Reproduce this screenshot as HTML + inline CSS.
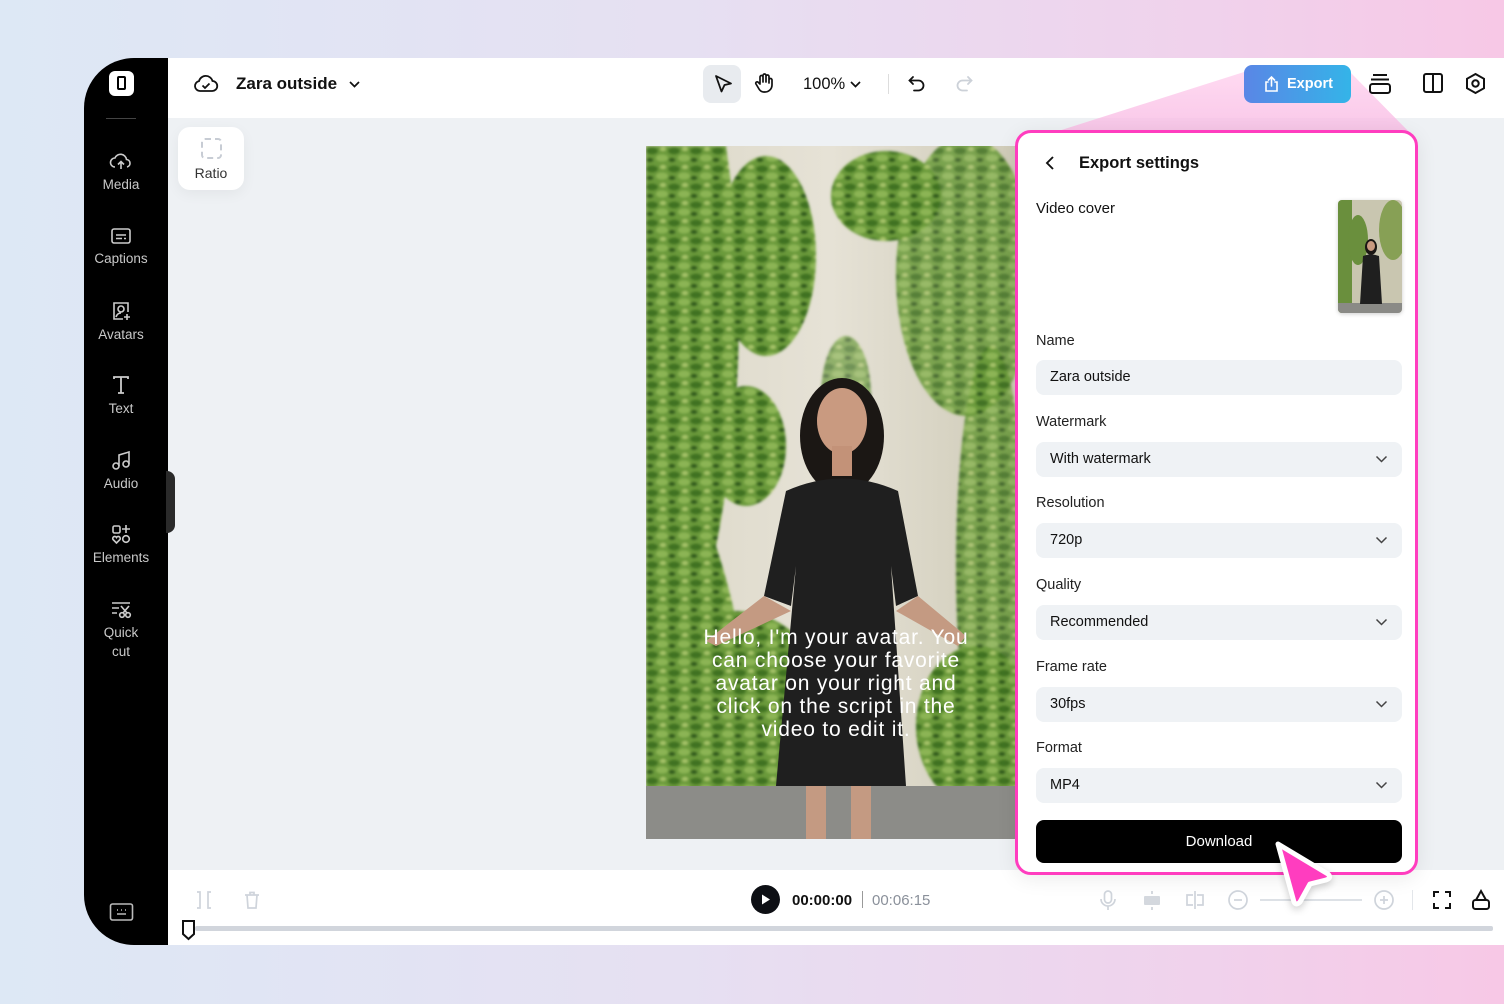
<!DOCTYPE html>
<html><head><meta charset="utf-8"><style>
*{box-sizing:border-box;margin:0;padding:0}
body{width:1504px;height:1004px;overflow:hidden;font-family:"Liberation Sans",sans-serif;position:relative;background:linear-gradient(90deg,#dde8f5 0%,#e6e0f2 45%,#f0d2ec 80%,#f7c8e6 100%);border-radius:40px}
.abs{position:absolute}
#side{left:84px;top:58px;width:84px;height:887px;background:#000;border-radius:50px 0 0 50px}
.si{position:absolute;left:0;width:74px;text-align:center;color:#c9c9c9;font-size:13.5px;line-height:19px}
.si svg{display:block;margin:0 auto 3px}
#app{left:168px;top:58px;width:1336px;height:887px;background:#eef1f4}
#top{left:168px;top:58px;width:1336px;height:60px;background:#fff}
#bot{left:168px;top:870px;width:1336px;height:75px;background:#fff}
.lbl{position:absolute;left:1036px;font-size:14.5px;color:#222}
.fld{position:absolute;left:1036px;width:366px;height:35px;background:#eff2f5;border-radius:8px;font-size:14.5px;color:#111;padding:0 14px;line-height:35px}
.fld svg{position:absolute;right:14px;top:12px}
</style></head><body>
<div id="side" class="abs"></div>
<div id="app" class="abs"></div>
<div id="top" class="abs"></div>
<div id="bot" class="abs"></div>

<!-- sidebar -->
<div class="abs" style="left:109px;top:71px;width:25px;height:25px;background:#fff;border-radius:6px"></div>
<div class="abs" style="left:117px;top:76px;width:9px;height:14px;border:2px solid #000;border-radius:2px"></div>
<div class="abs" style="left:106px;top:118px;width:30px;height:1px;background:#444"></div>
<div class="si" style="left:84px;top:150px"><svg width="24" height="22" viewBox="0 0 24 22" fill="none" stroke="#ccc" stroke-width="1.6"><path d="M6 17a4.5 4.5 0 0 1 0-9 6 6 0 0 1 11.5 1.5A3.8 3.8 0 0 1 18 17"/><path d="M12 19v-7M9 14.5l3-3 3 3"/></svg>Media</div>
<div class="si" style="left:84px;top:226px"><svg width="22" height="20" viewBox="0 0 22 20" fill="none" stroke="#ccc" stroke-width="1.6"><rect x="2" y="3" width="18" height="14" rx="2"/><path d="M6 9h10M6 12.5h6M14 12.5h2"/></svg>Captions</div>
<div class="si" style="left:84px;top:300px"><svg width="22" height="22" viewBox="0 0 22 22" fill="none" stroke="#ccc" stroke-width="1.6"><path d="M13 19H4V3h14v9"/><circle cx="11" cy="9" r="3"/><path d="M6 17c1-3 3-4 5-4"/><path d="M17 14v6M14 17h6"/></svg>Avatars</div>
<div class="si" style="left:84px;top:374px"><svg width="22" height="22" viewBox="0 0 22 22" fill="none" stroke="#ccc" stroke-width="1.8"><path d="M4 5V3h14v2M11 3v16M8 19h6"/></svg>Text</div>
<div class="si" style="left:84px;top:449px"><svg width="22" height="22" viewBox="0 0 22 22" fill="none" stroke="#ccc" stroke-width="1.6"><circle cx="6" cy="17" r="3"/><circle cx="16" cy="15" r="3"/><path d="M9 17V6l10-3v12"/></svg>Audio</div>
<div class="si" style="left:84px;top:523px"><svg width="22" height="22" viewBox="0 0 22 22" fill="none" stroke="#ccc" stroke-width="1.6"><rect x="3" y="3" width="7" height="7" rx="1.5"/><path d="M16 2v8M12 6h8"/><path d="M6.5 20l-3.5-3.5a2 2 0 0 1 3.5-2 2 2 0 0 1 3.5 2z"/><circle cx="16" cy="16" r="3.3"/></svg>Elements</div>
<div class="si" style="left:84px;top:598px"><svg width="22" height="22" viewBox="0 0 22 22" fill="none" stroke="#ccc" stroke-width="1.6"><path d="M2 5h18M2 10h7M2 15h5"/><circle cx="12" cy="17" r="2.3"/><circle cx="18" cy="17" r="2.3"/><path d="M13 15l6-7M17 15l-6-7"/></svg>Quick<br>cut</div>
<div class="abs" style="left:166px;top:471px;width:9px;height:62px;background:#2a2a2a;border-radius:0 8px 8px 0"></div>
<svg class="abs" style="left:109px;top:902px" width="25" height="20" viewBox="0 0 25 20" fill="none" stroke="#bbb" stroke-width="1.6"><rect x="1.5" y="2" width="22" height="16" rx="2"/><path d="M8 8h1M12 8h1M16 8h1M8 12h9"/></svg>

<!-- top bar -->
<svg class="abs" style="left:193px;top:72px" width="26" height="22" viewBox="0 0 26 22" fill="none" stroke="#111" stroke-width="1.8"><path d="M7 19a5 5 0 0 1-1-9.9A7 7 0 0 1 19.5 9 5 5 0 0 1 19 19z"/><path d="M9.5 13.5l2.5 2.5 4.5-4.5"/></svg>
<div class="abs" style="left:236px;top:74px;font-size:17px;font-weight:bold;color:#111">Zara outside</div>
<svg class="abs" style="left:348px;top:79px" width="13" height="10" viewBox="0 0 13 10" fill="none" stroke="#111" stroke-width="1.7"><path d="M2 3l4.5 4.5L11 3"/></svg>
<div class="abs" style="left:703px;top:65px;width:38px;height:38px;background:#e8ebef;border-radius:8px"></div>
<svg class="abs" style="left:712px;top:73px" width="22" height="22" viewBox="0 0 22 22" fill="none" stroke="#111" stroke-width="1.8" stroke-linejoin="round"><path d="M4 3l15 7.5-6.5 1.5-3 6.5z"/></svg>
<svg class="abs" style="left:752px;top:71px" width="24" height="24" viewBox="0 0 24 24" fill="none" stroke="#111" stroke-width="1.7" stroke-linecap="round" stroke-linejoin="round"><path d="M8 12V6a1.5 1.5 0 0 1 3 0v5M11 10V4.5a1.5 1.5 0 0 1 3 0V11M14 10.5V5.5a1.5 1.5 0 0 1 3 0V12M17 9a1.5 1.5 0 0 1 3 0v5a7 7 0 0 1-7 7h-1a6 6 0 0 1-5-3l-3-5a1.4 1.4 0 0 1 2.3-1.6L8 13"/></svg>
<div class="abs" style="left:803px;top:75px;font-size:16.5px;color:#111">100%</div>
<svg class="abs" style="left:849px;top:79px" width="13" height="10" viewBox="0 0 13 10" fill="none" stroke="#111" stroke-width="1.7"><path d="M2 3l4.5 4.5L11 3"/></svg>
<div class="abs" style="left:888px;top:74px;width:1px;height:20px;background:#ddd"></div>
<svg class="abs" style="left:906px;top:73px" width="22" height="22" viewBox="0 0 22 22" fill="none" stroke="#111" stroke-width="1.8" stroke-linecap="round"><path d="M7 4L3.5 7.5 7 11"/><path d="M4 7.5h8.5a5 5 0 0 1 0 10H8"/></svg>
<svg class="abs" style="left:953px;top:73px" width="22" height="22" viewBox="0 0 22 22" fill="none" stroke="#ccd1d8" stroke-width="1.8" stroke-linecap="round"><path d="M15 4l3.5 3.5L15 11"/><path d="M18 7.5H9.5a5 5 0 0 0 0 10H14"/></svg>

<!-- pink beam -->
<svg class="abs" style="left:0;top:0" width="1504" height="1004"><defs><linearGradient id="bm" x1="0" y1="0" x2="0" y2="1"><stop offset="0" stop-color="#ffd6f0" stop-opacity=".9"/><stop offset="1" stop-color="#f7b8e2" stop-opacity=".8"/></linearGradient></defs><polygon points="1244,72 1350,72 1417,140 1030,140" fill="url(#bm)"/></svg>

<div class="abs" style="left:1244px;top:65px;width:107px;height:38px;border-radius:8px;background:linear-gradient(90deg,#5a86e6,#34b4e8);color:#fff;font-size:14.5px;font-weight:bold;line-height:38px;padding-left:43px">Export</div>
<svg class="abs" style="left:1263px;top:75px" width="17" height="18" viewBox="0 0 17 18" fill="none" stroke="#fff" stroke-width="1.6" stroke-linecap="round"><path d="M5 7H3v9h11V7h-2M8.5 11V2M5.5 5l3-3 3 3"/></svg>
<svg class="abs" style="left:1368px;top:72px" width="24" height="24" viewBox="0 0 24 24" fill="none" stroke="#111" stroke-width="2"><path d="M5 3h14M3 7.5h18"/><rect x="2" y="12" width="20" height="9" rx="2.5"/></svg>
<svg class="abs" style="left:1422px;top:72px" width="22" height="22" viewBox="0 0 22 22" fill="none" stroke="#111" stroke-width="2"><rect x="2" y="2" width="18" height="18" rx="2"/><path d="M11 2v18"/></svg>
<svg class="abs" style="left:1464px;top:72px" width="23" height="23" viewBox="0 0 23 23" fill="none" stroke="#111" stroke-width="2"><path d="M11.5 2l8.5 4.8v9.4L11.5 21 3 16.2V6.8z"/><circle cx="11.5" cy="11.5" r="3.2"/></svg>

<!-- ratio -->
<div class="abs" style="left:178px;top:127px;width:66px;height:63px;background:#fff;border-radius:12px;box-shadow:0 4px 14px rgba(0,0,0,.05)"></div>
<div class="abs" style="left:201px;top:138px;width:21px;height:21px;border:2px dashed #c7ccd4;border-radius:4px"></div>
<div class="abs" style="left:178px;top:165px;width:66px;text-align:center;font-size:14px;color:#333">Ratio</div>

<!-- video -->
<svg class="abs" style="left:646px;top:146px" width="369" height="693" viewBox="0 0 369 693">
<defs><linearGradient id="wall" x1="0" x2="1"><stop offset="0" stop-color="#dcd8c8"/><stop offset=".5" stop-color="#e6e2d6"/><stop offset="1" stop-color="#cfcbb8"/></linearGradient>
<filter id="bl"><feGaussianBlur stdDeviation="1.2"/></filter>
<pattern id="lv" width="22" height="18" patternUnits="userSpaceOnUse"><rect width="22" height="18" fill="#6a9a3a"/><ellipse cx="6" cy="5" rx="6" ry="3.5" fill="#3f7222"/><ellipse cx="16" cy="12" rx="6" ry="3.5" fill="#8cb555"/><ellipse cx="4" cy="14" rx="3.5" ry="2.2" fill="#2f5a1a"/><ellipse cx="17" cy="3" rx="3" ry="2" fill="#a8c56a"/></pattern></defs>
<rect width="369" height="693" fill="url(#wall)"/>
<g filter="url(#bl)">
<g fill="url(#lv)"><path d="M0 0H80Q110 200 70 400Q120 550 90 693H0Z"/><ellipse cx="120" cy="110" rx="50" ry="100"/><ellipse cx="100" cy="300" rx="40" ry="60"/><ellipse cx="320" cy="130" rx="70" ry="140" opacity=".85"/><ellipse cx="240" cy="50" rx="55" ry="45"/><ellipse cx="345" cy="420" rx="35" ry="220" opacity=".85"/><ellipse cx="90" cy="560" rx="90" ry="95"/><ellipse cx="330" cy="580" rx="60" ry="80"/><ellipse cx="200" cy="250" rx="25" ry="60" opacity=".7"/><ellipse cx="40" cy="780" rx="20" ry="20"/></g>
</g>
<rect x="0" y="640" width="369" height="53" fill="#8c8c88"/>
<ellipse cx="196" cy="290" rx="42" ry="58" fill="#1b1714"/>
<ellipse cx="196" cy="275" rx="25" ry="33" fill="#c99a80"/>
<rect x="186" y="300" width="20" height="30" fill="#c39278"/>
<path d="M140 345 Q196 320 252 345 L272 450 L250 460 L245 420 L260 640 L130 640 L150 420 L145 460 L118 450 Z" fill="#1f1f1f"/>
<path d="M118 450 L60 495 L70 500 L145 465Z M272 450 L320 490 L312 500 L250 465Z" fill="#c49a82"/>
<rect x="160" y="640" width="20" height="53" fill="#c49a82"/><rect x="205" y="640" width="20" height="53" fill="#c49a82"/>
<text fill="#fff" font-family="Liberation Sans,sans-serif" font-size="21" text-anchor="middle" letter-spacing="0.8"><tspan x="190" y="498">Hello, I'm your avatar. You</tspan><tspan x="190" y="521">can choose your favorite</tspan><tspan x="190" y="544">avatar on your right and</tspan><tspan x="190" y="567">click on the script in the</tspan><tspan x="190" y="590">video to edit it.</tspan></text>
</svg>

<!-- export panel -->
<div class="abs" style="left:1015px;top:130px;width:403px;height:745px;background:#fff;border:3px solid #ff3dbf;border-radius:16px;box-shadow:0 4px 20px rgba(0,0,0,.08)"></div>
<svg class="abs" style="left:1042px;top:154px" width="16" height="18" viewBox="0 0 16 18" fill="none" stroke="#111" stroke-width="1.9"><path d="M11 3L5 9l6 6"/></svg>
<div class="abs" style="left:1079px;top:154px;font-size:16.5px;font-weight:bold;color:#111">Export settings</div>
<div class="abs" style="left:1036px;top:200px;font-size:15px;color:#111">Video cover</div>
<svg class="abs" style="left:1338px;top:200px;border-radius:4px;box-shadow:0 1px 4px rgba(0,0,0,.2)" width="64" height="113" viewBox="0 0 64 113"><rect width="64" height="113" fill="#c9c6b0"/><rect width="14" height="113" fill="#6a8f3d"/><ellipse cx="55" cy="30" rx="14" ry="30" fill="#87a055"/><ellipse cx="20" cy="40" rx="10" ry="25" fill="#6a8f3d"/><rect y="103" width="64" height="10" fill="#8a8a86"/><ellipse cx="33" cy="47" rx="6" ry="8" fill="#1b1714"/><ellipse cx="33" cy="46" rx="4" ry="5" fill="#c99a80"/><path d="M25 56Q33 53 41 56L44 104H22Z" fill="#1f1f1f"/></svg>
<div class="lbl" style="top:333px">Name</div>
<div class="fld" style="top:360px">Zara outside</div>
<div class="lbl" style="top:414px">Watermark</div>
<div class="fld" style="top:442px">With watermark<svg width="13" height="10" viewBox="0 0 13 10" fill="none" stroke="#444" stroke-width="1.5"><path d="M1.5 2.5l5 5 5-5"/></svg></div>
<div class="lbl" style="top:495px">Resolution</div>
<div class="fld" style="top:523px">720p<svg width="13" height="10" viewBox="0 0 13 10" fill="none" stroke="#444" stroke-width="1.5"><path d="M1.5 2.5l5 5 5-5"/></svg></div>
<div class="lbl" style="top:577px">Quality</div>
<div class="fld" style="top:605px">Recommended<svg width="13" height="10" viewBox="0 0 13 10" fill="none" stroke="#444" stroke-width="1.5"><path d="M1.5 2.5l5 5 5-5"/></svg></div>
<div class="lbl" style="top:659px">Frame rate</div>
<div class="fld" style="top:687px">30fps<svg width="13" height="10" viewBox="0 0 13 10" fill="none" stroke="#444" stroke-width="1.5"><path d="M1.5 2.5l5 5 5-5"/></svg></div>
<div class="lbl" style="top:740px">Format</div>
<div class="fld" style="top:768px">MP4<svg width="13" height="10" viewBox="0 0 13 10" fill="none" stroke="#444" stroke-width="1.5"><path d="M1.5 2.5l5 5 5-5"/></svg></div>
<div class="abs" style="left:1036px;top:820px;width:366px;height:43px;background:#000;border-radius:8px;color:#fff;font-size:15px;text-align:center;line-height:43px">Download</div>

<!-- bottom bar -->
<svg class="abs" style="left:194px;top:890px" width="20" height="20" viewBox="0 0 20 20" fill="none" stroke="#cfd4db" stroke-width="1.7"><path d="M3 2h3v16H3M17 2h-3v16h3"/></svg>
<svg class="abs" style="left:242px;top:890px" width="20" height="20" viewBox="0 0 20 20" fill="none" stroke="#cfd4db" stroke-width="1.7"><path d="M3 5h14M8 5V2.5h4V5M5 5l1 13h8l1-13"/></svg>
<div class="abs" style="left:751px;top:885px;width:29px;height:29px;border-radius:50%;background:#0d0f14"></div>
<svg class="abs" style="left:761px;top:894px" width="10" height="11" viewBox="0 0 10 11"><path d="M1 0.5l8 5-8 5z" fill="#fff"/></svg>
<div class="abs" style="left:792px;top:892px;font-size:15px;font-weight:bold;color:#111">00:00:00</div>
<div class="abs" style="left:862px;top:891px;width:1px;height:17px;background:#999"></div>
<div class="abs" style="left:872px;top:892px;font-size:15px;color:#8a909a">00:06:15</div>
<svg class="abs" style="left:1098px;top:889px" width="20" height="22" viewBox="0 0 20 22" fill="none" stroke="#cfd4db" stroke-width="1.7"><rect x="6.5" y="2" width="7" height="12" rx="3.5"/><path d="M3 10a7 7 0 0 0 14 0M10 17v4"/></svg>
<svg class="abs" style="left:1141px;top:889px" width="22" height="22" viewBox="0 0 22 22" fill="#d4d8de"><rect x="3" y="7" width="16" height="9" rx="1"/><rect x="10" y="2" width="2" height="3"/><rect x="10" y="18" width="2" height="3"/></svg>
<svg class="abs" style="left:1184px;top:889px" width="22" height="22" viewBox="0 0 22 22" fill="none" stroke="#cfd4db" stroke-width="1.7"><path d="M11 2v18M9 6H3v10h6M13 6h6v10h-6"/></svg>
<svg class="abs" style="left:1227px;top:889px" width="22" height="22" viewBox="0 0 22 22" fill="none" stroke="#cfd4db" stroke-width="1.7"><circle cx="11" cy="11" r="9"/><path d="M7 11h8"/></svg>
<div class="abs" style="left:1260px;top:899px;width:102px;height:2px;background:#dde1e6"></div>
<svg class="abs" style="left:1373px;top:889px" width="22" height="22" viewBox="0 0 22 22" fill="none" stroke="#cfd4db" stroke-width="1.7"><circle cx="11" cy="11" r="9"/><path d="M7 11h8M11 7v8"/></svg>
<div class="abs" style="left:1412px;top:890px;width:1px;height:20px;background:#e3e6ea"></div>
<svg class="abs" style="left:1432px;top:890px" width="20" height="20" viewBox="0 0 20 20" fill="none" stroke="#111" stroke-width="2"><path d="M2 7V2h5M13 2h5v5M18 13v5h-5M7 18H2v-5"/></svg>
<svg class="abs" style="left:1471px;top:888px" width="20" height="24" viewBox="0 0 20 24" fill="none" stroke="#111" stroke-width="2"><rect x="2" y="12" width="16" height="9" rx="2.5"/><path d="M5 12l5-9 5 9"/></svg>
<div class="abs" style="left:195px;top:926px;width:1298px;height:5px;background:#d1d5dc;border-radius:2px"></div>
<svg class="abs" style="left:180px;top:918px" width="17" height="24" viewBox="0 0 17 24" fill="#fff" stroke="#111" stroke-width="2"><path d="M3 3h11v13l-5.5 5L3 16z"/></svg>

<!-- cursor -->
<svg class="abs" style="left:1266px;top:832px" width="76" height="84" viewBox="0 0 76 84"><path d="M12 12 L62 42 Q66 46 60 48 L44 52 L34 70 Q30 74 28 70 Z" fill="#ff3dbf" stroke="#fff" stroke-width="5" stroke-linejoin="round" style="filter:drop-shadow(0 3px 4px rgba(0,0,0,.2))"/></svg>
</body></html>
